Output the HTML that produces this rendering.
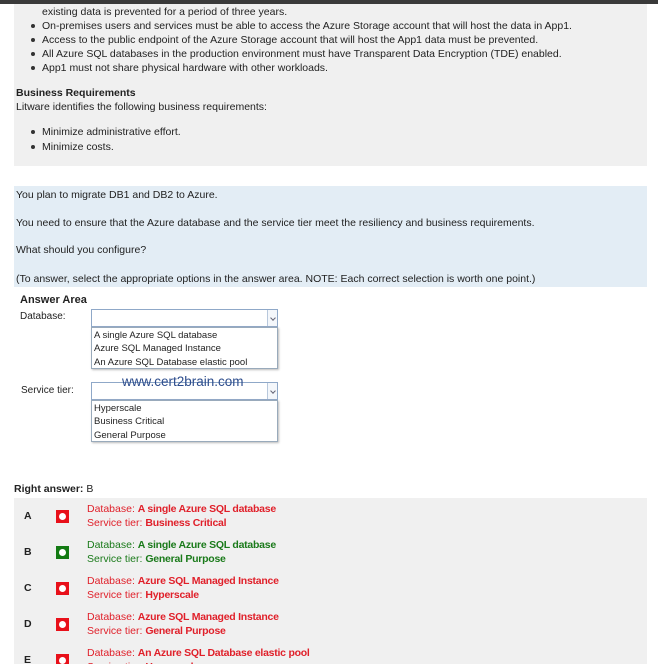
<!DOCTYPE html>
<html><head><meta charset="utf-8"><style>
*{margin:0;padding:0;box-sizing:border-box}
html,body{width:658px;height:664px;overflow:hidden}
body{background:#fff;font-family:"Liberation Sans",sans-serif;font-size:10.5px;color:#222;position:relative}
.a{position:absolute;white-space:nowrap;line-height:12px}
.bar{position:absolute;left:0;top:0;width:658px;height:4px;background:#3a3a3a}
.g{position:absolute;left:14px;width:633px;background:#f0f0f0}
.bl{position:absolute;left:14px;width:633px;top:186px;height:101px;background:#e3edf5}
.dot{position:absolute;width:4px;height:4px;border-radius:50%;background:#333}
.sel{position:absolute;left:91px;width:187px;height:18px;border:1px solid #8fa8c8;background:#fff}
.sel i{position:absolute;right:0;top:0;width:10px;height:16px;border-left:1px solid #b8c8dc;background:#f4f7fb}
.sel i:after{content:"";position:absolute;left:3px;top:6px;width:3px;height:3px;border-right:1px solid #667;border-bottom:1px solid #667;transform:rotate(45deg)}
.lst{position:absolute;left:91px;width:187px;height:42px;border:1px solid #9ab;background:#fff;box-shadow:1px 1px 2px #bbb;font-size:9.5px;padding:1px 2px;line-height:13.3px}
.sq{position:absolute;left:56px;width:13px;height:13px;background:#e8101a}
.sq:after{content:"";position:absolute;left:3px;top:3px;width:7px;height:7px;border-radius:50%;background:#fff}
.sq.gr{background:#137a13}
.r{color:#e0202a}.gn{color:#1a7a1a}
b{font-weight:bold}
.v{font-weight:bold;letter-spacing:-0.25px}
</style></head><body>
<div class="g" style="top:0;height:166px"></div>
<div class="bar"></div>
<div class="a" style="left:42px;top:6px">existing data is prevented for a period of three years.</div>
<div class="dot" style="left:31px;top:24px"></div><div class="a" style="left:42px;top:20px">On-premises users and services must be able to access the Azure Storage account that will host the data in App1.</div>
<div class="dot" style="left:31px;top:38px"></div><div class="a" style="left:42px;top:34px">Access to the public endpoint of the Azure Storage account that will host the App1 data must be prevented.</div>
<div class="dot" style="left:31px;top:52px"></div><div class="a" style="left:42px;top:48px">All Azure SQL databases in the production environment must have Transparent Data Encryption (TDE) enabled.</div>
<div class="dot" style="left:31px;top:66px"></div><div class="a" style="left:42px;top:62px">App1 must not share physical hardware with other workloads.</div>
<div class="a" style="left:16px;top:87px;font-weight:bold">Business Requirements</div>
<div class="a" style="left:16px;top:101px">Litware identifies the following business requirements:</div>
<div class="dot" style="left:31px;top:130px"></div><div class="a" style="left:42px;top:126px">Minimize administrative effort.</div>
<div class="dot" style="left:31px;top:145px"></div><div class="a" style="left:42px;top:141px">Minimize costs.</div>

<div class="bl"></div>
<div class="a" style="left:16px;top:189px">You plan to migrate DB1 and DB2 to Azure.</div>
<div class="a" style="left:16px;top:217px">You need to ensure that the Azure database and the service tier meet the resiliency and business requirements.</div>
<div class="a" style="left:16px;top:244px">What should you configure?</div>
<div class="a" style="left:16px;top:273px">(To answer, select the appropriate options in the answer area. NOTE: Each correct selection is worth one point.)</div>

<div class="a" style="left:20px;top:294px;font-weight:bold;font-size:11px">Answer Area</div>
<div class="a" style="left:20px;top:311px;font-size:10px">Database:</div>
<div class="sel" style="top:309px"><i></i></div>
<div class="lst" style="top:327px">A single Azure SQL database<br>Azure SQL Managed Instance<br>An Azure SQL Database elastic pool</div>
<div class="a" style="left:21px;top:385px;font-size:10px">Service tier:</div>
<div class="sel" style="top:382px"><i></i></div>
<div class="lst" style="top:400px">Hyperscale<br>Business Critical<br>General Purpose</div>
<div class="a" style="left:122px;top:374px;font-size:13.5px;color:#2c4c8c;line-height:15px">www.cert2brain.com</div>

<div class="a" style="left:14px;top:483px"><b>Right answer:</b> B</div>
<div class="g" style="top:498px;height:166px"></div>

<div class="a" style="left:24px;top:510px;font-weight:bold">A</div><div class="sq" style="top:510px"></div>
<div class="a r" style="left:87px;top:503px">Database: <span class="v">A single Azure SQL database</span></div>
<div class="a r" style="left:87px;top:517px">Service tier: <span class="v">Business Critical</span></div>

<div class="a" style="left:24px;top:546px;font-weight:bold">B</div><div class="sq gr" style="top:546px"></div>
<div class="a gn" style="left:87px;top:539px">Database: <span class="v">A single Azure SQL database</span></div>
<div class="a gn" style="left:87px;top:553px">Service tier: <span class="v">General Purpose</span></div>

<div class="a" style="left:24px;top:582px;font-weight:bold">C</div><div class="sq" style="top:582px"></div>
<div class="a r" style="left:87px;top:575px">Database: <span class="v">Azure SQL Managed Instance</span></div>
<div class="a r" style="left:87px;top:589px">Service tier: <span class="v">Hyperscale</span></div>

<div class="a" style="left:24px;top:618px;font-weight:bold">D</div><div class="sq" style="top:618px"></div>
<div class="a r" style="left:87px;top:611px">Database: <span class="v">Azure SQL Managed Instance</span></div>
<div class="a r" style="left:87px;top:625px">Service tier: <span class="v">General Purpose</span></div>

<div class="a" style="left:24px;top:654px;font-weight:bold">E</div><div class="sq" style="top:654px"></div>
<div class="a r" style="left:87px;top:647px">Database: <span class="v">An Azure SQL Database elastic pool</span></div>
<div class="a r" style="left:87px;top:661px">Service tier: <span class="v">Hyperscale</span></div>
</body></html>
